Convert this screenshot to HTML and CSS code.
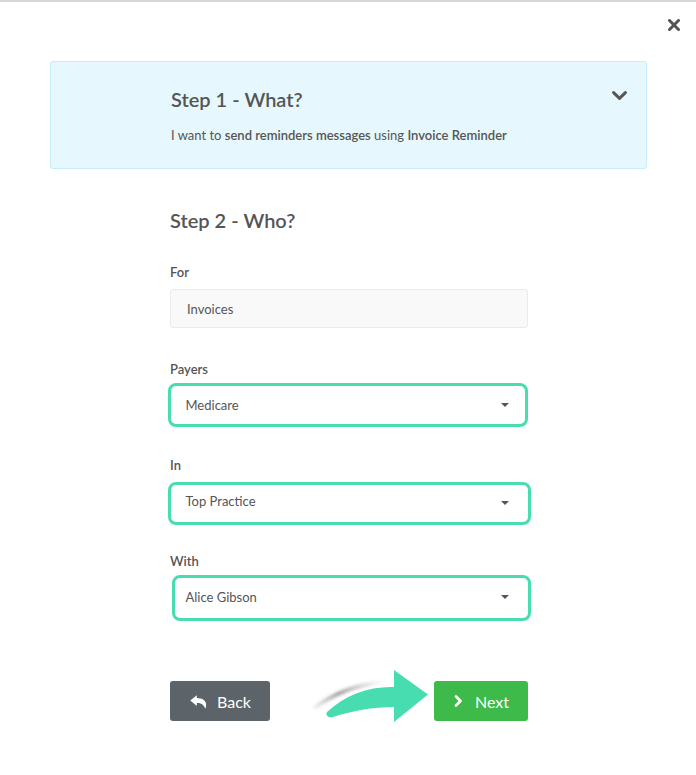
FILE: index.html
```html
<!DOCTYPE html>
<html lang="en">
<head>
<meta charset="utf-8">
<title>Invoice Reminder - Step 2</title>
<link rel="stylesheet" href="styles.css">
</head>
<body>
<div class="modal">
  <button class="close" aria-label="Close">
    <svg width="12" height="12" viewBox="0 0 12 12"><path d="M1.5 1.5 L10.5 10.5 M10.5 1.5 L1.5 10.5" stroke="#555" stroke-width="3" stroke-linecap="round"/></svg>
  </button>

  <section class="step1">
    <h2 class="step-title">Step 1 - What?</h2>
    <p class="step-desc">I want to <b>send reminders messages</b> using <b>Invoice Reminder</b></p>
    <span class="chevron">
      <svg width="15" height="9" viewBox="0 0 15 9"><path d="M1.6 1.6 L7.5 7.3 L13.4 1.6" fill="none" stroke="#555" stroke-width="3" stroke-linecap="round" stroke-linejoin="round"/></svg>
    </span>
  </section>

  <section class="form">
    <h2 class="step-title">Step 2 - Who?</h2>

    <div class="field field-for">
      <div class="label">For</div>
      <div class="input">Invoices</div>
    </div>

    <div class="field field-payers">
      <div class="label">Payers</div>
      <div class="select">Medicare<span class="caret"></span></div>
    </div>

    <div class="field field-in">
      <div class="label">In</div>
      <div class="select">Top Practice<span class="caret"></span></div>
    </div>

    <div class="field field-with">
      <div class="label">With</div>
      <div class="select">Alice Gibson<span class="caret"></span></div>
    </div>

    <div class="actions">
      <button class="btn btn-back">
        <svg width="17" height="14" viewBox="0 0 17 14"><path d="M6.8 0.3 L0.3 5.6 L6.8 10.9 L6.8 8.1 C10.8 7.9 13.4 9.4 15.4 13.8 C17.8 7.4 14.4 3.2 6.8 3.1 Z" fill="#fff"/></svg>
        <span>Back</span>
      </button>
      <svg class="pointer" width="140" height="70" viewBox="0 0 140 70">
        <defs>
          <linearGradient id="sh" x1="0" y1="0" x2="1" y2="0">
            <stop offset="0" stop-color="#777" stop-opacity="0.1"/>
            <stop offset="0.35" stop-color="#777" stop-opacity="0.7"/>
            <stop offset="1" stop-color="#999" stop-opacity="0"/>
          </linearGradient>
          <filter id="bl" x="-20%" y="-50%" width="140%" height="200%"><feGaussianBlur stdDeviation="1.6"/></filter>
        </defs>
        <path d="M14 48 C34 33 55 25 84 22" fill="none" stroke="url(#sh)" stroke-width="4" filter="url(#bl)"/>
        <path d="M95 27 C70 26 46 34 27 52 C25 56 29 58 33 57 C52 51 72 47 95 47 Z" fill="#47ddb0"/>
        <path d="M94 10 L128 34.5 L94 62 Z" fill="#47ddb0"/>
      </svg>
      <button class="btn btn-next">
        <svg width="9" height="12" viewBox="0 0 9 12"><path d="M2 1.5 L6.5 6 L2 10.5" fill="none" stroke="#fff" stroke-width="2.6" stroke-linecap="round" stroke-linejoin="round"/></svg>
        <span>Next</span>
      </button>
    </div>
  </section>
</div>
</body>
</html>
```

FILE: styles.css
```css
* { box-sizing: border-box; }

html, body {
  margin: 0;
  padding: 0;
  background: #fff;
}

body {
  font-family: Lato, "Open Sans", "Liberation Sans", sans-serif;
  color: #555;
  font-size: 13px;
}

.modal {
  position: relative;
  width: 696px;
  height: 775px;
  border-top: 2px solid #d6d6d6;
  padding-top: 59px;
}

.close {
  position: absolute;
  top: 17px;
  right: 16px;
  width: 12px;
  height: 12px;
  padding: 0;
  border: 0;
  background: none;
  display: flex;
}

.step1 {
  position: relative;
  margin-left: 50px;
  width: 597px;
  height: 108px;
  background: #e6f8fd;
  border: 1px solid #c4eef9;
  border-radius: 3px;
  padding: 25px 20px 0 120px;
}

.step-title {
  margin: 0;
  font-size: 20px;
  line-height: 24px;
  font-weight: 600;
  color: #555;
}

.step-desc {
  margin: 16px 0 0;
  font-size: 13px;
  line-height: 16px;
}

.step-desc b {
  font-weight: 600;
}

.chevron {
  position: absolute;
  top: 29px;
  right: 19px;
  display: flex;
}

.form {
  margin-left: 170px;
  width: 358px;
  padding-top: 39px;
}

.label {
  font-size: 13px;
  line-height: 16px;
  font-weight: 600;
}

.field-for { margin-top: 32px; }
.field-for .label { margin-bottom: 9px; }

.input {
  height: 39px;
  background: #f9f9f9;
  border: 1px solid #ebebeb;
  border-radius: 3px;
  padding-left: 16px;
  display: flex;
  align-items: center;
  font-size: 13px;
}

.select {
  display: flex;
  align-items: center;
  justify-content: space-between;
  border: 3.5px solid #47ddb0;
  border-radius: 8px;
  background: #fff;
  padding-left: 14.5px;
  font-size: 13px;
}

.caret {
  width: 0;
  height: 0;
  border-left: 4px solid transparent;
  border-right: 4px solid transparent;
  border-top: 4px solid #555;
}

.field-payers { margin-top: 33px; }
.field-payers .label { margin-bottom: 6px; }
.field-payers .select {
  margin-left: -2px;
  width: 360px;
  height: 44px;
  padding-right: 16px;
}

.field-in { margin-top: 30px; }
.field-in .label { margin-bottom: 9px; }
.field-in .select {
  margin-left: -2px;
  width: 363px;
  height: 43px;
  padding-right: 19px;
  padding-bottom: 5px;
}

.field-in .select .caret { margin-top: 3px; }

.field-with { margin-top: 28px; }
.field-with .label { margin-bottom: 6px; }
.field-with .select {
  margin-left: 2px;
  width: 359px;
  height: 46px;
  padding-left: 10.5px;
  padding-right: 19px;
  padding-bottom: 2px;
}

.actions {
  position: relative;
  margin-top: 60px;
  display: flex;
  justify-content: space-between;
}

.btn {
  height: 40px;
  border: 0;
  border-radius: 3px;
  color: #fff;
  font-family: Lato, "Open Sans", "Liberation Sans", sans-serif;
  font-size: 16px;
  display: flex;
  align-items: center;
  padding: 0 0 0 20px;
  cursor: pointer;
}

.btn-back {
  width: 100px;
  background: #5c6369;
  gap: 10px;
}

.btn-back svg { margin-top: 1px; }

.btn-next {
  width: 94px;
  background: #3dba4a;
  gap: 12px;
}

.pointer {
  position: absolute;
  left: 130px;
  top: -21px;
}
```
